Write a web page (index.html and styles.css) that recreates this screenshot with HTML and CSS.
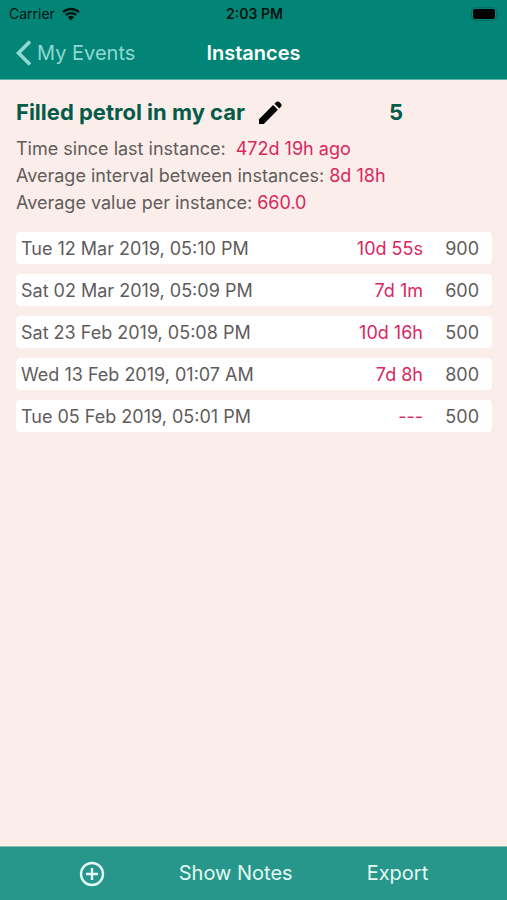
FILE: index.html
```html
<!DOCTYPE html>
<html lang="en">
<head>
<meta charset="utf-8">
<meta name="viewport" content="width=device-width, initial-scale=1">
<title>Instances</title>
<link rel="stylesheet" href="styles.css">
</head>
<body>
<header class="top">
  <div class="status">
    <div class="carrier">
      <span>Carrier</span>
      <svg class="wifi" viewBox="0 0 18 14" aria-hidden="true">
        <path d="M1 5.2a11.6 11.6 0 0 1 16 0M3.8 8.2a7.6 7.6 0 0 1 10.4 0" fill="none" stroke="currentColor" stroke-width="2.4"/>
        <path d="M5.9 10.3a4.5 4.5 0 0 1 6.2 0L9 13.5z" fill="currentColor"/>
      </svg>
    </div>
    <span class="time">2:03 PM</span>
    <svg class="battery" viewBox="0 0 29 14" aria-hidden="true">
      <rect x=".5" y=".5" width="25" height="13" rx="4" fill="none" stroke="#026b60"/>
      <rect x="2" y="2" width="22" height="10" rx="2.5"/>
      <path d="M27 5q2 2 0 4z" fill="#026b60"/>
    </svg>
  </div>
  <nav class="nav">
    <a class="back" href="#">
      <svg class="chevron" viewBox="0 0 16 26" aria-hidden="true"><path d="M14 1.5L2.5 13 14 24.500" fill="none" stroke="currentColor" stroke-width="3.600"/></svg>
      <span>My Events</span>
    </a>
    <h1 class="title">Instances</h1>
  </nav>
</header>
<main class="content">
  <div class="event">
    <h2 class="name">Filled petrol in my car</h2>
    <button class="edit" type="button" aria-label="Edit">
      <svg viewBox="3 3 18 18" aria-hidden="true"><path d="M3 17.250V21h3.750L17.810 9.940l-3.750-3.750L3 17.250zM20.400 7.350a2 2 0 0 0 0-2.030l-1.720-1.720a2 2 0 0 0-2.030 0l-1.530 1.520 3.750 3.750z"/></svg>
    </button>
    <span class="count">5</span>
  </div>
  <dl class="stats">
    <div class="stat stat-wide"><dt>Time since last instance:</dt><dd>472d 19h ago</dd></div>
    <div class="stat"><dt>Average interval between instances:</dt><dd>8d 18h</dd></div>
    <div class="stat"><dt>Average value per instance:</dt><dd>660.0</dd></div>
  </dl>
  <table class="instances">
    <tbody>
      <tr><td>Tue 12 Mar 2019, 05:10 PM</td><td class="interval">10d 55s</td><td class="value">900</td></tr>
      <tr><td>Sat 02 Mar 2019, 05:09 PM</td><td class="interval">7d 1m</td><td class="value">600</td></tr>
      <tr><td>Sat 23 Feb 2019, 05:08 PM</td><td class="interval">10d 16h</td><td class="value">500</td></tr>
      <tr><td>Wed 13 Feb 2019, 01:07 AM</td><td class="interval">7d 8h</td><td class="value">800</td></tr>
      <tr><td>Tue 05 Feb 2019, 05:01 PM</td><td class="interval">---</td><td class="value">500</td></tr>
    </tbody>
  </table>
</main>
<footer class="toolbar">
  <button class="tool" type="button" aria-label="Add instance">
    <svg class="plus" viewBox="0 0 26 26" aria-hidden="true"><path d="M13 7v12M7 13h12M24 13a11 11 0 1 1-22 0 11 11 0 0 1 22 0z" fill="none" stroke="currentColor" stroke-width="2.400"/></svg>
  </button>
  <button class="tool" type="button">Show Notes</button>
  <button class="tool" type="button">Export</button>
</footer>
</body>
</html>
```

FILE: styles.css
```css
* {
  box-sizing: border-box;
}

body {
  margin: 0;
  min-height: 100vh;
  display: flex;
  flex-direction: column;
  background: #fbede9;
  color: #5f5c5c;
  font-family: Inter, "Liberation Sans", sans-serif;
  font-size: 18px;
  line-height: 27px;
}

svg {
  display: block;
}

button {
  padding: 0;
  border: 0;
  background: none;
  color: inherit;
  font: inherit;
}

.top {
  background: #028577;
  border-bottom: 1px solid #5db5aa;
}

.status,
.nav {
  display: grid;
  grid-template-columns: 1fr auto 1fr;
  align-items: center;
}

.status {
  height: 27px;
  padding: 0 7px 0 9px;
  color: #02140f;
  font-size: 14px;
}

.carrier {
  display: flex;
  align-items: center;
  gap: 7px;
}

.wifi {
  width: 18px;
  height: 14px;
}

.time {
  font-weight: 600;
}

.battery {
  width: 29px;
  height: 14px;
  justify-self: end;
}

.nav {
  height: 52px;
  padding: 0 16px;
  font-size: 20px;
}

.back {
  display: flex;
  align-items: center;
  gap: 5px;
  color: #90d8d1;
  text-decoration: none;
  white-space: nowrap;
}

.chevron {
  width: 16px;
  height: 26px;
}

.title {
  margin: 0;
  color: #fff;
  font-size: 20px;
  font-weight: 600;
}

.content {
  flex: 1;
  padding: 16px 15px 16px 16px;
}

.event {
  display: flex;
  align-items: center;
  height: 32px;
  margin-bottom: 7px;
  color: #035b49;
}

.name {
  margin: 0;
  font-size: 22px;
  font-weight: 700;
}

.edit {
  margin-left: 14px;
  color: #000;
}

.edit svg {
  width: 23px;
  height: 23px;
}

.count {
  margin-left: auto;
  margin-right: 89px;
  font-size: 22px;
  font-weight: 700;
}

.stats {
  margin: 0 0 6px;
}

.stat {
  display: flex;
  gap: 5px;
}

.stat-wide {
  gap: 10px;
}

.stat dd {
  margin: 0;
  color: #d8275f;
}

.instances {
  width: 100%;
  border-collapse: separate;
  border-spacing: 0 10px;
}

.instances td {
  height: 32px;
  padding: 0 5px;
  background: #fff;
}

.instances td:first-child {
  border-radius: 4px 0 0 4px;
}

.instances td:last-child {
  border-radius: 0 4px 4px 0;
}

.instances .interval {
  padding: 0;
  color: #d8275f;
  text-align: right;
}

.instances .value {
  width: 69px;
  padding: 0 13px 0 0;
  text-align: right;
}

.toolbar {
  display: flex;
  justify-content: center;
  align-items: center;
  gap: 74px;
  height: 54px;
  background: #26978a;
  border-top: 1px solid #8cc0b6;
  color: #e4f8f4;
  font-size: 20px;
}

.plus {
  width: 26px;
  height: 26px;
}
```
